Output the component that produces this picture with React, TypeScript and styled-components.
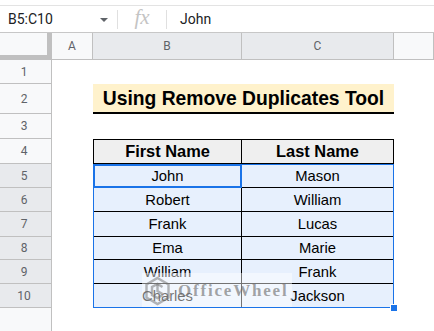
import { Fragment } from 'react';
import styled, { createGlobalStyle } from 'styled-components';

const GlobalStyle = createGlobalStyle`
    * { box-sizing: border-box; }
    body {
        margin: 0;
        background: #fff;
        font-family: Roboto, "Liberation Sans", Arial, sans-serif;
        overflow: hidden;
    }
`

const Page = styled.div`
    width: 434px;
    height: 331px;
    overflow: hidden;
    background: #fff;
`

const TopStrip = styled.div`
    height: 6px;
    border-bottom: 1px solid #e3e3e3;
`

const FormulaBar = styled.div`
    height: 27px;
    display: flex;
    align-items: center;
    border-bottom: 1px solid #c7c7c7;
    color: #202124;
    font-size: 14px;
`

const NameBox = styled.div`
    width: 117px;
    display: flex;
    align-items: center;
    justify-content: space-between;
    padding: 0 9px 0 8px;
`

const Arrow = styled.span`
    width: 0;
    height: 0;
    border-left: 4px solid transparent;
    border-right: 4px solid transparent;
    border-top: 4px solid #5f6368;
    margin-top: 2px;
`

const Divider = styled.div`
    width: 1px;
    height: 19px;
    background: #e0e0e0;
`

const Fx = styled.div`
    width: 48px;
    text-align: center;
    font-family: "Liberation Serif", serif;
    font-style: italic;
    font-size: 21px;
    color: #c4c4c4;
    line-height: 1;
    margin-top: -3px;
`

const FormulaText = styled.div`
    padding-left: 13px;
`

const Sheet = styled.div`
    position: relative;
    display: grid;
    grid-template-columns: 52px 41px 149px 152px 1fr;
    grid-template-rows: 27px 24px 30px 25px 25px 24px 24px 25px 23px 24px 24px 40px;
`

const Corner = styled.div`
    background: #f8f9fa;
    border-right: 5px solid #c0c0c0;
    border-bottom: 5px solid #c0c0c0;
`

const ColHead = styled.div<{ $sel?: boolean }>`
    background: ${p => (p.$sel ? '#e8eaed' : '#f8f9fa')};
    border-right: 1px solid #c0c0c0;
    border-bottom: 1px solid #c0c0c0;
    display: flex;
    align-items: center;
    justify-content: center;
    font-size: 12px;
    color: #5f6368;
`

const RowHead = styled.div<{ $sel?: boolean; $low?: boolean }>`
    background: ${p => (p.$sel ? '#e8eaed' : '#f8f9fa')};
    border-right: 1px solid #c0c0c0;
    border-bottom: 1px solid #c0c0c0;
    display: flex;
    align-items: ${p => (p.$low ? 'flex-end' : 'center')};
    justify-content: center;
    font-size: 12px;
    color: #5f6368;
    padding-right: 3px;
`

const Blank = styled.div``

const Title = styled.div`
    grid-column: span 2;
    background: #fff2cc;
    border-bottom: 2px solid #000;
    display: flex;
    align-items: center;
    justify-content: center;
    font-family: "Liberation Sans", Arial, sans-serif;
    font-weight: bold;
    font-size: 19.3px;
    color: #000;
    padding-top: 1px;
`

const Cell = styled.div<{ $head?: boolean; $first?: boolean; $active?: boolean }>`
    background: ${p => (p.$head ? '#efefef' : '#e7f0fd')};
    border-right: 1px solid #000;
    border-bottom: 1px solid #000;
    border-left: ${p => (p.$first ? '1px solid #000' : 'none')};
    border-top: ${p => (p.$head ? '1px solid #000' : 'none')};
    display: flex;
    align-items: center;
    justify-content: center;
    font-family: "Liberation Sans", Arial, sans-serif;
    font-size: ${p => (p.$head ? '16.4px' : '14.8px')};
    font-weight: ${p => (p.$head ? 'bold' : 'normal')};
    color: #000;
    outline: ${p => (p.$active ? '2px solid #1a73e8' : 'none')};
    outline-offset: -2px;
`

const Selection = styled.div`
    position: absolute;
    left: 93px;
    top: 131px;
    width: 301px;
    height: 144px;
    border: 1px solid #1a73e8;
    pointer-events: none;
`

const Handle = styled.div`
    position: absolute;
    right: -5px;
    bottom: -5px;
    width: 8px;
    height: 8px;
    background: #1a73e8;
    border: 1px solid #fff;
`

const Watermark = styled.div`
    position: absolute;
    left: 142px;
    top: 240px;
    width: 150px;
    height: 35px;
    background: rgba(255, 255, 255, 0.45);
    display: flex;
    align-items: center;
    gap: 7px;
    padding-left: 2px;
`

const MarkText = styled.span`
    font-family: "Liberation Serif", serif;
    font-weight: bold;
    font-size: 17px;
    letter-spacing: 1.8px;
    color: rgba(105, 105, 105, 0.6);
`

const rows = [
    ['John', 'Mason'],
    ['Robert', 'William'],
    ['Frank', 'Lucas'],
    ['Ema', 'Marie'],
    ['William', 'Frank'],
    ['Charles', 'Jackson'],
];

function Logo() {
    return (
        <svg width="27" height="30" viewBox="0 0 27 30">
            <g fill="none" stroke="rgba(110,110,110,0.5)" strokeWidth="2.4">
                <path d="M13.5 2 L24.5 8.5 L24.5 21.5 L13.5 28 L2.5 21.5 L2.5 8.5 Z" />
                <path d="M18.5 11 L13.5 8 L8 11 L8 19 L13.5 22 L18.5 19" />
                <path d="M13.5 8 L13.5 15 L18.5 18" />
            </g>
        </svg>
    );
}

export default function App() {
    return (
        <Page>
            <GlobalStyle />
            <TopStrip />
            <FormulaBar>
                <NameBox>
                    <span>B5:C10</span>
                    <Arrow />
                </NameBox>
                <Divider />
                <Fx>fx</Fx>
                <Divider />
                <FormulaText>John</FormulaText>
            </FormulaBar>

            <Sheet>
                <Corner />
                <ColHead>A</ColHead>
                <ColHead $sel>B</ColHead>
                <ColHead $sel>C</ColHead>
                <ColHead />

                <RowHead>1</RowHead>
                <Blank /><Blank /><Blank /><Blank />

                <RowHead>2</RowHead>
                <Blank />
                <Title>Using Remove Duplicates Tool</Title>
                <Blank />

                <RowHead>3</RowHead>
                <Blank /><Blank /><Blank /><Blank />

                <RowHead>4</RowHead>
                <Blank />
                <Cell $head $first>First Name</Cell>
                <Cell $head>Last Name</Cell>
                <Blank />

                {rows.map(([first, last], i) => (
                    <Fragment key={i}>
                        <RowHead $sel>{i + 5}</RowHead>
                        <Blank />
                        <Cell $first $active={i === 0}>{first}</Cell>
                        <Cell>{last}</Cell>
                        <Blank />
                    </Fragment>
                ))}

                <RowHead $low>11</RowHead>
                <Blank /><Blank /><Blank /><Blank />

                <Watermark>
                    <Logo />
                    <MarkText>OfficeWheel</MarkText>
                </Watermark>
                <Selection>
                    <Handle />
                </Selection>
            </Sheet>
        </Page>
    );
}
